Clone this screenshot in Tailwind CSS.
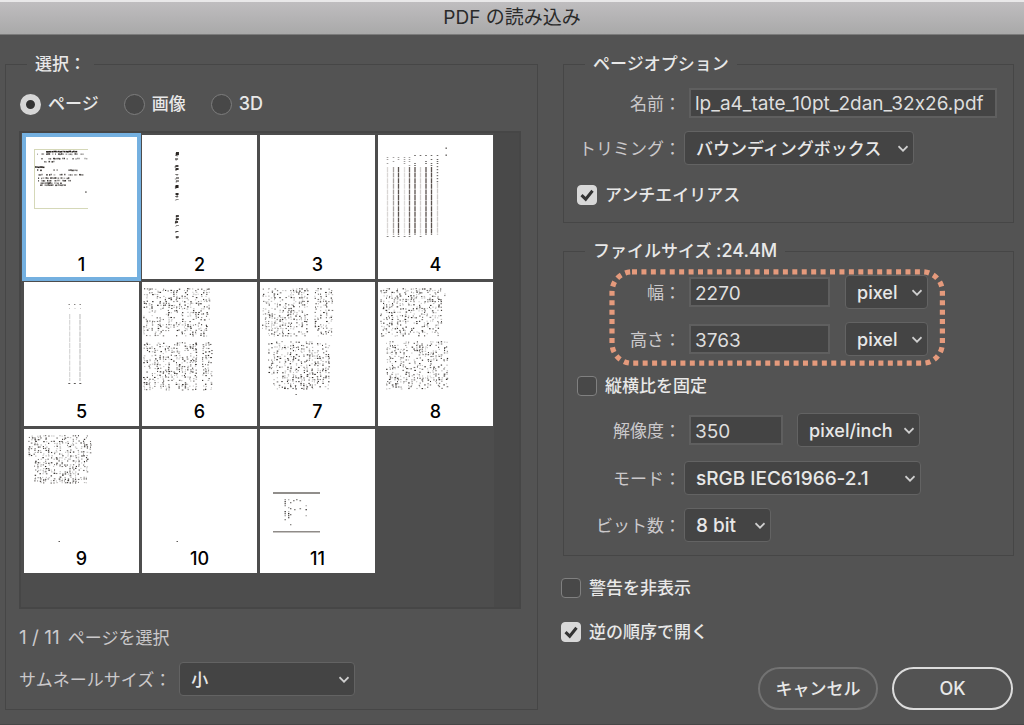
<!DOCTYPE html>
<html lang="ja">
<head>
<meta charset="utf-8">
<meta name="viewport" content="width=device-width, initial-scale=1">
<title>PDF の読み込み</title>
<script src="https://cdn.jsdelivr.net/npm/@tailwindcss/browser@4"></script>
</head>
<body class="min-h-screen flex flex-col bg-[#535353] text-[#e8e8e8] text-[17px] leading-[26px] font-['Inter','Noto_Sans_CJK_JP',sans-serif] [font-feature-settings:'calt'_0]">

<header class="h-[35px] shrink-0 flex items-center justify-center border-t-2 border-t-[#e9e8e9] border-b border-b-[#7b7b7b] bg-linear-to-b from-[#bfbdbf] to-[#a9a9a9]">
  <h1 class="text-[19px] font-normal text-[#2a2a2a]">PDF の読み込み</h1>
</header>

<form class="grow grid grid-cols-[533fr_451fr] gap-x-[25px] items-start pt-4 pl-[5px] pr-[10px] pb-[13px] border-b border-[#474747]">

  <fieldset class="min-w-0 border border-[#464646] pl-[13px] pr-4 pb-[13px]">
    <legend class="ml-2 px-2 font-medium">選択：</legend>

    <div class="flex items-center pt-[14px] pl-px gap-[25px] font-medium">
      <label class="flex items-center gap-[7px]"><input type="radio" name="kind" checked class="appearance-none size-[21px] rounded-full bg-[#484848] border border-[#7d7d7d] checked:bg-[#333] checked:border-[6px] checked:border-[#d6d6d6]">ページ</label>
      <label class="flex items-center gap-[7px]"><input type="radio" name="kind" class="appearance-none size-[21px] rounded-full bg-[#484848] border border-[#7d7d7d] checked:bg-[#333] checked:border-[6px] checked:border-[#d6d6d6]">画像</label>
      <label class="flex items-center gap-[7px]"><input type="radio" name="kind" class="appearance-none size-[21px] rounded-full bg-[#484848] border border-[#7d7d7d] checked:bg-[#333] checked:border-[6px] checked:border-[#d6d6d6]"><span class="text-[18px]">3D</span></label>
    </div>

    <div class="mt-[14px] flex border-2 border-[#464646] bg-[#4d4d4d]">
      <ol class="grow grid grid-cols-[repeat(4,115px)] gap-[3px] content-start pl-[3px] pt-[2px] pb-[34px] text-[18px] font-medium text-black text-center">
        <li class="h-36 bg-white outline-4 -outline-offset-2 outline-[#74b0e0] flex flex-col"><svg data-page="1" class="w-full h-[117px]"></svg>1</li>
        <li class="h-36 bg-white flex flex-col"><svg data-page="2" class="w-full h-[117px]"></svg>2</li>
        <li class="h-36 bg-white flex flex-col"><svg data-page="3" class="w-full h-[117px]"></svg>3</li>
        <li class="h-36 bg-white flex flex-col"><svg data-page="4" class="w-full h-[117px]"></svg>4</li>
        <li class="h-36 bg-white flex flex-col"><svg data-page="5" class="w-full h-[117px]"></svg>5</li>
        <li class="h-36 bg-white flex flex-col"><svg data-page="6" class="w-full h-[117px]"></svg>6</li>
        <li class="h-36 bg-white flex flex-col"><svg data-page="7" class="w-full h-[117px]"></svg>7</li>
        <li class="h-36 bg-white flex flex-col"><svg data-page="8" class="w-full h-[117px]"></svg>8</li>
        <li class="h-36 bg-white flex flex-col"><svg data-page="9" class="w-full h-[117px]"></svg>9</li>
        <li class="h-36 bg-white flex flex-col"><svg data-page="10" class="w-full h-[117px]"></svg>10</li>
        <li class="h-36 bg-white flex flex-col"><svg data-page="11" class="w-full h-[117px]"></svg>11</li>
      </ol>
      <div class="w-[25px] shrink-0 bg-[#494949]"></div>
    </div>

    <p class="mt-4 flex items-center gap-2 text-[#cbc9cb]"><span class="text-[19px]">1 / 11</span> ページを選択</p>
    <div class="mt-[11px] flex items-center gap-2">
      <label for="thumb" class="pt-0.5 text-[#cbc9cb]">サムネールサイズ：</label>
      <div class="relative">
        <select id="thumb" class="appearance-none block w-44 h-[34px] pl-[11px] pt-0.5 rounded-[4px] border border-[#636363] bg-[#444] font-medium"><option>小</option></select>
        <svg class="absolute right-[6px] top-[14px] w-[10px] h-2 pointer-events-none" viewBox="0 0 10 8" fill="none" stroke="#cfcfcf" stroke-width="1.7"><path d="M0.5 1.2 5 5.7 9.500 1.200"/></svg>
      </div>
    </div>
  </fieldset>

  <div class="min-w-0">
    <fieldset class="min-w-0 border border-[#464646] pl-[13px] pr-4 pb-[14px]">
      <legend class="ml-2 px-2 font-medium">ページオプション</legend>
      <div class="mt-[9px] h-[34px] flex items-center gap-2">
        <label for="name" class="w-[104px] shrink-0 pt-0.5 text-right text-[#cbc9cb]">名前：</label>
        <input id="name" type="text" value="lp_a4_tate_10pt_2dan_32x26.pdf" class="grow min-w-0 h-[30px] pl-1 text-[19px] border-2 border-[#5f5f5f] bg-[#444] text-[#dedede]">
      </div>
      <div class="mt-[11px] flex items-center gap-[3px]">
        <label for="crop" class="w-[104px] shrink-0 pt-0.5 text-right text-[#cbc9cb]">トリミング：</label>
        <div class="relative">
          <select id="crop" class="appearance-none block w-[230px] h-[34px] pl-[11px] pt-0.5 rounded-[4px] border border-[#636363] bg-[#444] font-medium"><option>バウンディングボックス</option></select>
          <svg class="absolute right-[6px] top-[14px] w-[10px] h-2 pointer-events-none" viewBox="0 0 10 8" fill="none" stroke="#cfcfcf" stroke-width="1.7"><path d="M0.5 1.2 5 5.7 9.500 1.200"/></svg>
        </div>
      </div>
      <label class="mt-[17px] flex items-center gap-2 font-medium">
        <span class="grid size-5"><input type="checkbox" checked class="peer appearance-none col-start-1 row-start-1 size-5 rounded-[4px] border border-[#808080] bg-[#484848] checked:bg-[#d8d8d8] checked:border-[#d8d8d8]"><svg class="col-start-1 row-start-1 size-5 pointer-events-none hidden peer-checked:block" viewBox="0 0 20 20" fill="none" stroke="#333" stroke-width="3"><path d="M4.500 10.200 8.700 14.200 15.500 5.800"/></svg></span>
        アンチエイリアス
      </label>
    </fieldset>

    <fieldset class="mt-[15px] min-w-0 border border-[#464646] pl-[13px] pr-4 pb-[13px]">
      <legend class="ml-2 px-2 font-medium">ファイルサイズ <span class="text-[18px]">:24.4M</span></legend>
      <div class="relative mt-[11px] w-[351px] flex flex-col gap-[13px]">
        <div class="flex items-center gap-[15px]">
          <div class="flex items-center gap-2">
            <label for="w" class="w-[104px] shrink-0 pt-0.5 text-right text-[#cbc9cb]">幅：</label>
            <input id="w" type="text" value="2270" class="w-[141px] h-[30px] pl-1 pt-0.5 text-[19px] border-2 border-[#5f5f5f] bg-[#444] text-[#dedede]">
          </div>
          <div class="relative">
            <select aria-label="幅の単位" class="appearance-none block w-[83px] h-[34px] pl-[11px] pt-0.5 text-[18px] rounded-[4px] border border-[#636363] bg-[#444] font-medium"><option>pixel</option></select>
            <svg class="absolute right-[6px] top-[14px] w-[10px] h-2 pointer-events-none" viewBox="0 0 10 8" fill="none" stroke="#cfcfcf" stroke-width="1.7"><path d="M0.5 1.2 5 5.7 9.500 1.200"/></svg>
          </div>
        </div>
        <div class="flex items-center gap-[15px]">
          <div class="flex items-center gap-2">
            <label for="h" class="w-[104px] shrink-0 pt-0.5 text-right text-[#cbc9cb]">高さ：</label>
            <input id="h" type="text" value="3763" class="w-[141px] h-[30px] pl-1 pt-0.5 text-[19px] border-2 border-[#5f5f5f] bg-[#444] text-[#dedede]">
          </div>
          <div class="relative">
            <select aria-label="高さの単位" class="appearance-none block w-[83px] h-[34px] pl-[11px] pt-0.5 text-[18px] rounded-[4px] border border-[#636363] bg-[#444] font-medium"><option>pixel</option></select>
            <svg class="absolute right-[6px] top-[14px] w-[10px] h-2 pointer-events-none" viewBox="0 0 10 8" fill="none" stroke="#cfcfcf" stroke-width="1.7"><path d="M0.5 1.2 5 5.7 9.500 1.200"/></svg>
          </div>
        </div>
        <!-- dotted highlight around the two size rows -->
        <svg class="absolute left-8 -top-[6px] w-[336px] h-[97px] pointer-events-none" viewBox="0 0 336 97" fill="none" stroke="#e59a7c" stroke-width="5.2"><rect x="3" y="2.800" width="330.400" height="91.400" rx="20" stroke-dasharray="5 4.430"/></svg>
      </div>
      <label class="mt-[17px] flex items-center gap-2 font-medium">
        <span class="grid size-5"><input type="checkbox" class="peer appearance-none col-start-1 row-start-1 size-5 rounded-[4px] border border-[#808080] bg-[#484848] checked:bg-[#d8d8d8] checked:border-[#d8d8d8]"><svg class="col-start-1 row-start-1 size-5 pointer-events-none hidden peer-checked:block" viewBox="0 0 20 20" fill="none" stroke="#333" stroke-width="3"><path d="M4.500 10.200 8.700 14.200 15.500 5.800"/></svg></span>
        縦横比を固定
      </label>
      <div class="mt-[14px] flex items-center gap-[14px]">
        <div class="flex items-center gap-2">
          <label for="res" class="w-[104px] shrink-0 pt-0.5 text-right text-[#cbc9cb]">解像度：</label>
          <input id="res" type="text" value="350" class="w-[94px] h-[30px] pl-1 pt-0.5 text-[19px] border-2 border-[#5f5f5f] bg-[#444] text-[#dedede]">
        </div>
        <div class="relative">
          <select aria-label="解像度の単位" class="appearance-none block w-[123px] h-[34px] pl-[11px] pt-0.5 text-[18px] rounded-[4px] border border-[#636363] bg-[#444] font-medium"><option>pixel/inch</option></select>
          <svg class="absolute right-[6px] top-[14px] w-[10px] h-2 pointer-events-none" viewBox="0 0 10 8" fill="none" stroke="#cfcfcf" stroke-width="1.7"><path d="M0.5 1.2 5 5.7 9.500 1.200"/></svg>
        </div>
      </div>
      <div class="mt-[14px] flex items-center gap-[3px]">
        <label for="mode" class="w-[104px] shrink-0 pt-0.5 text-right text-[#cbc9cb]">モード：</label>
        <div class="relative">
          <select id="mode" class="appearance-none block w-[237px] h-[34px] pl-[11px] pt-0.5 text-[19px] rounded-[4px] border border-[#636363] bg-[#444] font-medium"><option>sRGB IEC61966-2.1</option></select>
          <svg class="absolute right-[6px] top-[14px] w-[10px] h-2 pointer-events-none" viewBox="0 0 10 8" fill="none" stroke="#cfcfcf" stroke-width="1.7"><path d="M0.5 1.2 5 5.7 9.500 1.200"/></svg>
        </div>
      </div>
      <div class="mt-[13px] flex items-center gap-[3px]">
        <label for="bits" class="w-[104px] shrink-0 pt-0.5 text-right text-[#cbc9cb]">ビット数：</label>
        <div class="relative">
          <select id="bits" class="appearance-none block w-[87px] h-[34px] pl-[11px] pt-0.5 text-[19px] rounded-[4px] border border-[#636363] bg-[#444] font-medium"><option>8 bit</option></select>
          <svg class="absolute right-[6px] top-[14px] w-[10px] h-2 pointer-events-none" viewBox="0 0 10 8" fill="none" stroke="#cfcfcf" stroke-width="1.7"><path d="M0.5 1.2 5 5.7 9.500 1.200"/></svg>
        </div>
      </div>
    </fieldset>

    <div class="-ml-[2px] mt-[19px] flex flex-col gap-[18px] font-medium">
      <label class="flex items-center gap-2">
        <span class="grid size-5"><input type="checkbox" class="peer appearance-none col-start-1 row-start-1 size-5 rounded-[4px] border border-[#808080] bg-[#484848] checked:bg-[#d8d8d8] checked:border-[#d8d8d8]"><svg class="col-start-1 row-start-1 size-5 pointer-events-none hidden peer-checked:block" viewBox="0 0 20 20" fill="none" stroke="#333" stroke-width="3"><path d="M4.500 10.200 8.700 14.200 15.500 5.800"/></svg></span>
        警告を非表示
      </label>
      <label class="flex items-center gap-2">
        <span class="grid size-5"><input type="checkbox" checked class="peer appearance-none col-start-1 row-start-1 size-5 rounded-[4px] border border-[#808080] bg-[#484848] checked:bg-[#d8d8d8] checked:border-[#d8d8d8]"><svg class="col-start-1 row-start-1 size-5 pointer-events-none hidden peer-checked:block" viewBox="0 0 20 20" fill="none" stroke="#333" stroke-width="3"><path d="M4.500 10.200 8.700 14.200 15.500 5.800"/></svg></span>
        逆の順序で開く
      </label>
    </div>

    <div class="mt-[22px] pr-px flex justify-end gap-[14px] font-medium">
      <button type="button" class="w-[120px] h-[43px] rounded-full border-2 border-[#727272]">キャンセル</button>
      <button type="submit" class="w-[121px] h-[43px] rounded-full border-2 border-[#dcdcdc] text-[18px]">OK</button>
    </div>
  </div>
</form>

<script>
// Page previews: tiny vertical-text pages drawn as specks, seeded so they are always the same.
let seed = 7;
const rnd = () => (seed = (seed * 16807) % 2147483647) / 2147483647;
const svgOf = n => document.querySelector('svg[data-page="' + n + '"]');
function shape(n, tag, attrs) {
  const el = document.createElementNS('http://www.w3.org/2000/svg', tag);
  for (const k in attrs) el.setAttribute(k, attrs[k]);
  svgOf(n).appendChild(el);
}
const speck = (n, x, y, w, h, o) => shape(n, 'rect', { x, y, width: w, height: h, fill: '#1a1512', 'fill-opacity': o });
const rule = (n, x1, y1, x2, y2, stroke, sw, dash) =>
  shape(n, 'path', { d: 'M' + x1 + ' ' + y1 + 'L' + x2 + ' ' + y2, stroke, 'stroke-width': sw, 'stroke-dasharray': dash || 'none' });

// vertical text block
function block(n, x1, y1, x2, y2, skip) {
  for (let x = x1; x < x2; x += 2.72) {
    if (skip && x > skip[0] && x < skip[1]) continue;
    for (let y = y1; y < y2; y += 1.8) {
      const r = rnd();
      if (r < 0.52) speck(n, x + rnd() * 1.2, y + rnd() * 0.8, 0.9 + rnd() * 0.8, 1.1, r < 0.17 ? 0.9 : r < 0.32 ? 0.6 : 0.28);
    }
  }
}
block(6, 1, 6, 65, 53); block(6, 66, 6, 68, 38);
block(6, 1, 60, 53, 107); block(6, 53, 60, 55, 78); block(6, 60, 60, 70, 107);
block(7, 2, 6, 8, 46); block(7, 8, 6, 71, 53, [47, 53]);
block(7, 8, 59, 13, 92); block(7, 13, 59, 70, 107, [30, 32]); speck(7, 35.5, 112, 1.3, 1, 0.7);
block(8, 2, 6, 64, 53); block(8, 66, 11, 68, 13);
block(8, 8, 59, 70, 107);
block(9, 4, 6, 10, 28); block(9, 10, 6, 64, 53); block(9, 65, 10, 67, 24); speck(9, 34.5, 112, 1.5, 1, 0.7);
speck(10, 34.5, 112, 1.5, 1, 0.7);

// page 1: framed horizontal text
rule(1, 10.5, 14, 10.5, 74, '#d5d8b8', 1); rule(1, 10, 14.5, 64, 14.5, '#d5d8b8', 1); rule(1, 10, 73.5, 64, 73.5, '#d5d8b8', 1);
[[16.5, 22, 54, 0.95], [19, 13, 60, 0.4], [23.5, 14, 64, 0.5], [26.5, 14, 36, 0.4], [32, 11, 21, 1], [35, 13, 60, 0.25],
 [39.5, 13, 60, 0.4], [43, 14, 46, 0.5], [45.5, 14, 48, 0.55], [48, 15, 38, 0.7], [50, 16, 42, 0.8], [57, 58, 64, 0.4]]
.forEach(([y, x1, x2, k]) => {
  for (let x = x1; x < x2 - 1; x += 1.5) if (rnd() < k + 0.12) speck(1, x, y - 0.8 + rnd() * 0.5, 1 + rnd(), 1.5, k > 0.9 ? 0.95 : 0.3 + rnd() * 0.6);
});

// page 2: title column
[[17, 3, 0.9], [20, 1, 0.4], [23, 2, 0.5], [30, 2, 0.8], [33, 2, 0.9], [39, 1, 0.6], [42, 2, 0.5], [45, 2, 0.5], [50, 3, 0.95], [58, 2, 0.9], [61, 1, 0.7], [64, 1, 0.5],
 [80, 2, 0.8], [83, 2, 0.8], [86, 2, 0.8], [90, 1, 0.5], [96, 1, 0.8], [101, 2, 0.7]]
.forEach(([y, h, o]) => { speck(2, 33 + rnd(), y, 3, h, o); speck(2, 32.5 + rnd() * 2, y + 1, 1.5, h, o * 0.5); });

// page 4: contents columns
[['#d9d6d4', 9.5], ['#a8a3a0', 15.5], ['#5a524e', 20.5], ['#dedcda', 26.5], ['#6e6662', 31.5], ['#5a524e', 37], ['#d2cfcd', 42.5], ['#5a524e', 48], ['#5a524e', 53.5], ['#cfccca', 59.5]]
.forEach(([c, x], i) => {
  rule(4, x, i === 9 ? 48 : 32, x, 100, c, 1.3, '5 0.6');
  const top = i < 5 ? 22 : 20;
  for (let y = top; y < 31; y += 2) if (y === top || rnd() < 0.45) speck(4, x - 0.8, y, 1.6, 1, i < 5 ? 0.4 : 0.65);
  if (i < 5 || i === 6) speck(4, x - 0.8, 101, 1.8, 1, 0.55);
  if (i === 9) for (let y = 31; y < 47; y += 3) speck(4, x - 0.8, y, 1.5, 1.2, 0.6);
});
speck(4, 67.5, 12.5, 1.4, 1.4, 0.7); speck(4, 67.5, 19.5, 1.4, 1.4, 0.7);

// page 5
rule(5, 45.7, 32, 45.7, 99, '#d3d3d3', 1.1, '5 0.8'); rule(5, 56, 32, 56, 99, '#c9c9c9', 1.3, '5 0.8');
[45, 50.5, 56].forEach(x => { speck(5, x - 0.5, 22, 1.4, 0.9, 0.6); speck(5, x, 26, 1, 1, 0.25); speck(5, x - 0.7, 101, 2, 1, 0.7); });

// page 11: colophon
rule(11, 13, 64, 60, 64, '#6d6865', 1.5); rule(11, 13, 102.7, 60, 102.7, '#8f8b88', 1.5);
[[24.5, 70, 92, 0.65], [28, 70, 96, 0.5], [30, 71, 97, 0.4], [45.5, 68, 94, 0.5]].forEach(([x, y1, y2, p]) => {
  for (let y = y1; y < y2; y += 2) if (rnd() < p) speck(11, x, y, 1.4, 1.3, 0.3 + rnd() * 0.6);
});
[[33, 71], [36, 70], [39.5, 71], [39.5, 79], [34, 80]].forEach(([x, y]) => speck(11, x, y, 1.6, 1.3, 0.5));
</script>
</body>
</html>
